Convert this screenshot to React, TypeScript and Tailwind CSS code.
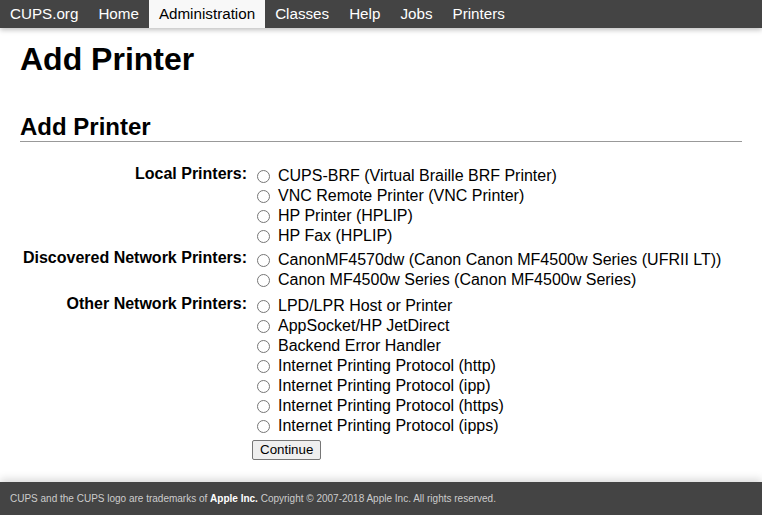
import React from 'react';

const NAV = ['CUPS.org', 'Home', 'Administration', 'Classes', 'Help', 'Jobs', 'Printers'];

const GROUPS: { label: string; items: string[]; gap: string }[] = [
  {
    label: 'Local Printers:',
    gap: 'mt-0',
    items: [
      'CUPS-BRF (Virtual Braille BRF Printer)',
      'VNC Remote Printer (VNC Printer)',
      'HP Printer (HPLIP)',
      'HP Fax (HPLIP)',
    ],
  },
  {
    label: 'Discovered Network Printers:',
    gap: 'mt-[2px]',
    items: [
      'CanonMF4570dw (Canon Canon MF4500w Series (UFRII LT))',
      'Canon MF4500w Series (Canon MF4500w Series)',
    ],
  },
  {
    label: 'Other Network Printers:',
    gap: 'mt-[4px]',
    items: [
      'LPD/LPR Host or Printer',
      'AppSocket/HP JetDirect',
      'Backend Error Handler',
      'Internet Printing Protocol (http)',
      'Internet Printing Protocol (ipp)',
      'Internet Printing Protocol (https)',
      'Internet Printing Protocol (ipps)',
    ],
  },
];

export default function App() {
  return (
    <div className="min-h-[515px] bg-white text-black font-['Liberation_Sans',Arial,sans-serif] flex flex-col">
      {/* Top navigation */}
      <nav className="h-[28px] bg-[#444] flex shadow-[0_2px_5px_rgba(0,0,0,0.25)] relative z-10">
        {NAV.map(n => (
          <a
            key={n}
            className={`px-[10px] text-[15.2px] leading-[28px] ${
              n === 'Administration' ? 'bg-[#f8f8f8] text-black' : 'text-white'
            }`}
          >
            {n}
          </a>
        ))}
      </nav>

      <main className="px-[20px] flex-1">
        <h1 className="mt-[15px] text-[32px] leading-[32px] font-bold">Add Printer</h1>
        <h2 className="mt-[40px] text-[24px] leading-[24px] font-bold pb-[2px] border-b border-[#999]">
          Add Printer
        </h2>

        <form className="mt-[22px]">
          {GROUPS.map(g => (
            <div key={g.label} className={`flex ${g.gap}`}>
              <div className="w-[232px] shrink-0 whitespace-nowrap text-right font-bold text-[16px] leading-[20px] pr-[5px]">
                {g.label}
              </div>
              <div className="pt-[2px]">
                {g.items.map(it => (
                  <label key={it} className="flex items-center h-[20px] text-[16px] whitespace-nowrap">
                    <input type="radio" name="device" className="m-0 ml-[5px] mr-[8px] w-[13px] h-[13px]" />
                    <span className="leading-[20px]">{it}</span>
                  </label>
                ))}
              </div>
            </div>
          ))}
          <div className="flex mt-[4px]">
            <div className="w-[232px] shrink-0" />
            <button
              type="button"
              className="px-[7px] py-[1px] border border-[#767676] bg-[#efefef] rounded-[2px] text-[13.33px] leading-[16px] text-black"
            >
              Continue
            </button>
          </div>
        </form>
      </main>

      <footer className="mt-[22px] h-[33px] bg-[#444] flex items-center px-[10px] text-[10px] text-[#ccc] shadow-[0_-3px_8px_rgba(0,0,0,0.15)]">
        <span>
          CUPS and the CUPS logo are trademarks of <a className="text-white font-bold">Apple Inc.</a> Copyright © 2007-2018 Apple Inc. All rights reserved.
        </span>
      </footer>
    </div>
  );
}
